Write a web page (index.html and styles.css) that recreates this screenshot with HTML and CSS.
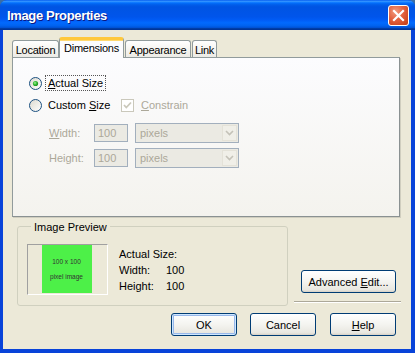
FILE: index.html
```html
<!DOCTYPE html>
<html>
<head>
<meta charset="utf-8">
<link rel="stylesheet" href="styles.css">
</head>
<body>
<div class="window">
  <div class="titlebar">
    <span class="title">Image Properties</span>
    <div class="close">
      <svg width="13" height="13" viewBox="0 0 13 13"><path d="M2 2 L11 11 M11 2 L2 11" stroke="#fff" stroke-width="2.2" stroke-linecap="square"/></svg>
    </div>
  </div>
  <div class="client">
    <div class="tabs">
      <div class="tab t-loc">Location</div>
      <div class="tab active t-dim">Dimensions</div>
      <div class="tab t-app">Appearance</div>
      <div class="tab t-link">Link</div>
    </div>
    <div class="panel">
      <div class="opt-row">
        <div class="opt">
          <svg class="radio" width="13" height="13" viewBox="0 0 13 13">
            <defs>
              <linearGradient id="rg" x1="0" y1="0" x2="1" y2="1"><stop offset="0" stop-color="#DCD9CE"/><stop offset="1" stop-color="#FFFFFF"/></linearGradient>
              <radialGradient id="dot" cx="0.4" cy="0.4" r="0.6"><stop offset="0" stop-color="#A8F0A0"/><stop offset="0.5" stop-color="#3CC23A"/><stop offset="1" stop-color="#1D8E1D"/></radialGradient>
            </defs>
            <circle cx="6.5" cy="6.5" r="6" fill="url(#rg)" stroke="#1C5180" stroke-width="1"/>
            <circle cx="6.5" cy="6.5" r="2.6" fill="url(#dot)"/>
          </svg>
          <span class="lbl focus"><u>A</u>ctual Size</span>
        </div>
      </div>
      <div class="opt-row row2">
        <div class="opt wide">
          <svg class="radio" width="13" height="13" viewBox="0 0 13 13">
            <circle cx="6.5" cy="6.5" r="6" fill="url(#rg)" stroke="#1C5180" stroke-width="1"/>
          </svg>
          <span class="lbl">Custom <u>S</u>ize</span>
        </div>
        <div class="opt">
          <svg class="check" width="13" height="13" viewBox="0 0 13 13">
            <rect x="0.5" y="0.5" width="12" height="12" fill="#FFFFFF" stroke="#CAC8BB"/>
            <path d="M3 6 L5.3 8.5 L10 3.5" fill="none" stroke="#CAC8BB" stroke-width="1.8"/>
          </svg>
          <span class="lbl dis"><u>C</u>onstrain</span>
        </div>
      </div>
      <div class="field-row first">
        <span class="flabel"><u>W</u>idth:</span>
        <span class="input">100</span>
        <span class="select"><span class="sel-text">pixels</span><span class="sel-btn"><svg width="9" height="6" viewBox="0 0 9 6"><path d="M1 1 L4.5 4.5 L8 1" fill="none" stroke="#C4C2B8" stroke-width="1.6"/></svg></span></span>
      </div>
      <div class="field-row">
        <span class="flabel">Height:</span>
        <span class="input">100</span>
        <span class="select"><span class="sel-text">pixels</span><span class="sel-btn"><svg width="9" height="6" viewBox="0 0 9 6"><path d="M1 1 L4.5 4.5 L8 1" fill="none" stroke="#C4C2B8" stroke-width="1.6"/></svg></span></span>
      </div>
    </div>
    <div class="lower">
      <fieldset class="group">
        <legend>Image Preview</legend>
        <div class="group-body">
          <div class="frame">
            <div class="thumb"><span>100 x 100</span><span>pixel image</span></div>
          </div>
          <div class="info">
            <div>Actual Size:</div>
            <div class="kv"><span class="k">Width:</span><span>100</span></div>
            <div class="kv"><span class="k">Height:</span><span>100</span></div>
          </div>
        </div>
      </fieldset>
      <div class="side">
        <div class="btn adv"><span>Advanced <u>E</u>dit...</span></div>
        <div class="sep"></div>
      </div>
    </div>
    <div class="buttons">
      <div class="btn default"><span>OK</span></div>
      <div class="btn"><span>Cancel</span></div>
      <div class="btn"><span><u>H</u>elp</span></div>
    </div>
  </div>
</div>
</body>
</html>
```
FILE: styles.css
```css
html, body {
  margin: 0;
  padding: 0;
  background: #3A6EA5;
}
body {
  width: 415px;
  height: 353px;
  overflow: hidden;
  font-family: "Liberation Sans", Arial, sans-serif;
  font-size: 11px;
  color: #000;
}
.window {
  width: 415px;
  height: 353px;
  box-sizing: border-box;
  background: #0843D9;
  border-radius: 7px 7px 0 0;
  display: flex;
  flex-direction: column;
  overflow: hidden;
}
.titlebar {
  height: 30px;
  flex: none;
  display: flex;
  align-items: center;
  padding-left: 7px;
  padding-right: 6px;
  background: linear-gradient(#0058EE 0%, #3593FF 4%, #288EFF 6%, #127DFF 8%, #036FFC 10%, #0262EE 14%, #0057E5 20%, #0054E3 24%, #0055EB 56%, #005BF5 66%, #026AFE 76%, #0062EF 86%, #0052D6 92%, #0040AB 94%, #003092 100%);
}
.title {
  flex: 1;
  color: #fff;
  font-weight: bold;
  font-size: 13px;
  text-shadow: 1px 1px 0 #0A1883;
  letter-spacing: -0.35px;
  padding-top: 1px;
}
.close {
  width: 19px;
  height: 19px;
  border: 1px solid #fff;
  border-radius: 3px;
  background: radial-gradient(circle at 35% 30%, #F39C7F 0%, #E2613F 45%, #C23B12 100%);
  display: flex;
  align-items: center;
  justify-content: center;
  margin-top: 1px;
}
.client {
  flex: 1;
  margin: 0 4px 4px 3px;
  background: #ECE9D8;
  display: flex;
  flex-direction: column;
}
.tabs {
  display: flex;
  align-items: flex-end;
  padding-left: 9px;
  margin-top: 7px;
  height: 20px;
  position: relative;
  z-index: 1;
}
.tab {
  box-sizing: border-box;
  height: 17px;
  border: 1px solid #919B9C;
  border-bottom: none;
  border-radius: 3px 3px 0 0;
  background: linear-gradient(#FFFFFF, #F4F3EE 60%, #ECEBE6);
  display: flex;
  align-items: center;
  justify-content: center;
  padding-top: 2px;
  letter-spacing: -0.25px;
}
.t-loc { width: 47px; }
.t-dim { width: 65px; }
.t-app { width: 66px; margin-left: 1px; }
.t-link { width: 25px; margin-left: 1px; }
.tab.active {
  height: 21px;
  margin-bottom: -1px;
  background: #FCFCFE;
  border-top: 3px solid #FFC83C;
  box-shadow: inset 0 1px 0 #FFD870;
  padding-top: 0;
  padding-bottom: 3px;
}
.panel {
  box-sizing: border-box;
  margin: 0 11px 0 9px;
  height: 160px;
  border: 1px solid #919B9C;
  border-right-color: #8A9192;
  border-bottom-color: #8A9192;
  box-shadow: 1px 1px 0 #D0CEBF;
  background: linear-gradient(#FCFCFE, #F4F3EE);
  padding: 17px 0 0 16px;
}
.opt-row {
  display: flex;
  align-items: center;
  height: 16px;
}
.row2 {
  margin-top: 6px;
}
.opt {
  display: flex;
  align-items: center;
}
.opt.wide {
  width: 92px;
}
.radio {
  flex: none;
  display: block;
}
.check {
  flex: none;
  display: block;
}
.lbl {
  border: 1px dotted transparent;
  padding: 0 2px;
  margin-left: 3px;
  line-height: 14px;
}
.lbl.focus {
  border-color: #555;
}
.lbl.dis {
  color: #ACA899;
  margin-left: 4px;
}
.field-row {
  display: flex;
  align-items: center;
  height: 20px;
  margin-top: 5px;
  padding-left: 20px;
}
.field-row.first {
  margin-top: 10px;
}
.flabel {
  width: 45px;
  color: #ACA899;
}
.input {
  box-sizing: border-box;
  width: 34px;
  height: 18px;
  border: 1px solid #A2AFBD;
  background: #EBEAE3;
  color: #ACA899;
  padding-left: 3px;
  line-height: 16px;
  margin-right: 7px;
}
.select {
  box-sizing: border-box;
  width: 104px;
  height: 20px;
  border: 1px solid #A2AFBD;
  background: #EBEAE3;
  color: #ACA899;
  display: flex;
  align-items: center;
}
.sel-text {
  flex: 1;
  padding-left: 4px;
}
.sel-btn {
  width: 15px;
  height: 16px;
  margin-right: 1px;
  background: #F0EFE8;
  border: 1px solid #E4E2D8;
  box-sizing: border-box;
  display: flex;
  align-items: center;
  justify-content: center;
}
.lower {
  display: flex;
  margin-top: 3px;
}
.group {
  box-sizing: border-box;
  margin: 0 0 0 14px;
  width: 271px;
  height: 86px;
  border: 1px solid #D0D0BF;
  border-radius: 3px;
  padding: 0 0 0 9px;
}
.group legend {
  padding: 0 3px;
  margin-left: 4px;
  line-height: 13px;
  position: relative;
  top: 1px;
}
.group-body {
  display: flex;
  margin-top: 11px;
}
.frame {
  box-sizing: border-box;
  width: 81px;
  height: 51px;
  border-top: 1px solid #A0A0A0;
  border-left: 1px solid #A0A0A0;
  border-right: 1px solid #FFFFFF;
  border-bottom: 1px solid #FFFFFF;
  display: flex;
  justify-content: center;
}
.thumb {
  width: 50px;
  height: 48px;
  background: #4DF048;
  display: flex;
  flex-direction: column;
  align-items: center;
  justify-content: center;
  gap: 8px;
  font-size: 6.5px;
  color: #333;
  margin-left: -2px;
}
.info {
  margin-left: 11px;
  margin-top: 2px;
  line-height: 16px;
}
.kv {
  display: flex;
}
.k {
  width: 47px;
}
.side {
  flex: 1;
  margin: 0 10px 3px 6px;
  display: flex;
  flex-direction: column;
  justify-content: flex-end;
}
.btn {
  box-sizing: border-box;
  width: 66px;
  height: 23px;
  border: 1px solid #003C74;
  border-radius: 3px;
  background: linear-gradient(#FFFFFF, #F4F4F0 50%, #E8E7E0 90%, #D6D0C5);
  display: flex;
  align-items: center;
  justify-content: center;
}
.adv {
  width: 95px;
  height: 23px;
  align-self: flex-end;
  margin-right: 5px;
}
.sep {
  margin-top: 8px;
  height: 1px;
  background: #ACA899;
  border-bottom: 1px solid #FFFFFF;
}
.buttons {
  display: flex;
  justify-content: flex-end;
  margin-top: 7px;
  padding-right: 15px;
  gap: 13px;
}
.buttons .btn + .btn + .btn {
  margin-left: 1px;
}
.btn.default {
  box-shadow: inset 0 0 0 1px #CEE7FF, inset 0 0 0 2px #98B8EA;
}
u {
  text-decoration: underline;
  text-underline-offset: 1px;
}
```
